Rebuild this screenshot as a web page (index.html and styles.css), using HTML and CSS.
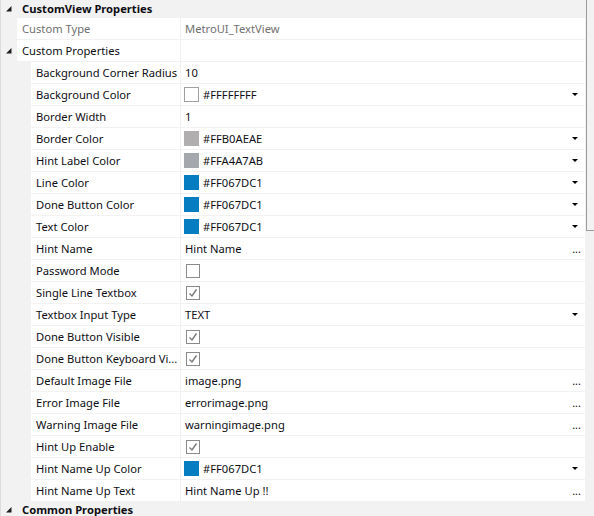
FILE: index.html
```html
<!DOCTYPE html>
<html>
<head>
<meta charset="utf-8">
<link rel="stylesheet" href="styles.css">
</head>
<body>
<div class="pg">
  <div class="grid">
    <div class="cat">
      <span class="exp"><svg width="6" height="6" viewBox="0 0 6 6"><polygon points="5.5,0 5.5,5.5 0,5.5"/></svg></span>
      <span class="cat-name">CustomView Properties</span>
    </div>
    <div class="row ro l1"><div class="ind"></div><div class="name">Custom Type</div><div class="val">MetroUI_TextView</div></div>
    <div class="row l1"><div class="ind"><span class="exp"><svg width="6" height="6" viewBox="0 0 6 6"><polygon points="5.5,0 5.5,5.5 0,5.5"/></svg></span></div><div class="name">Custom Properties</div><div class="val"></div></div>

    <div class="row l2"><div class="ind"></div><div class="name">Background Corner Radius</div><div class="val">10</div></div>
    <div class="row l2"><div class="ind"></div><div class="name">Background Color</div><div class="val"><span class="sw sw-white"></span><span class="txt">#FFFFFFFF</span><span class="dd"></span></div></div>
    <div class="row l2"><div class="ind"></div><div class="name">Border Width</div><div class="val">1</div></div>
    <div class="row l2"><div class="ind"></div><div class="name">Border Color</div><div class="val"><span class="sw sw-b0"></span><span class="txt">#FFB0AEAE</span><span class="dd"></span></div></div>
    <div class="row l2"><div class="ind"></div><div class="name">Hint Label Color</div><div class="val"><span class="sw sw-a4"></span><span class="txt">#FFA4A7AB</span><span class="dd"></span></div></div>
    <div class="row l2"><div class="ind"></div><div class="name">Line Color</div><div class="val"><span class="sw sw-blue"></span><span class="txt">#FF067DC1</span><span class="dd"></span></div></div>
    <div class="row l2"><div class="ind"></div><div class="name">Done Button Color</div><div class="val"><span class="sw sw-blue"></span><span class="txt">#FF067DC1</span><span class="dd"></span></div></div>
    <div class="row l2"><div class="ind"></div><div class="name">Text Color</div><div class="val"><span class="sw sw-blue"></span><span class="txt">#FF067DC1</span><span class="dd"></span></div></div>
    <div class="row l2"><div class="ind"></div><div class="name">Hint Name</div><div class="val"><span class="txt">Hint Name</span><span class="el">...</span></div></div>
    <div class="row l2"><div class="ind"></div><div class="name">Password Mode</div><div class="val"><span class="cb"></span></div></div>
    <div class="row l2"><div class="ind"></div><div class="name">Single Line Textbox</div><div class="val"><span class="cb"><svg width="12" height="12" viewBox="0 0 12 12"><polyline points="2.5,6.5 5,9 9.5,2.5"/></svg></span></div></div>
    <div class="row l2"><div class="ind"></div><div class="name">Textbox Input Type</div><div class="val"><span class="txt">TEXT</span><span class="dd"></span></div></div>
    <div class="row l2"><div class="ind"></div><div class="name">Done Button Visible</div><div class="val"><span class="cb"><svg width="12" height="12" viewBox="0 0 12 12"><polyline points="2.5,6.5 5,9 9.5,2.5"/></svg></span></div></div>
    <div class="row l2"><div class="ind"></div><div class="name">Done Button Keyboard Vi...</div><div class="val"><span class="cb"><svg width="12" height="12" viewBox="0 0 12 12"><polyline points="2.5,6.5 5,9 9.5,2.5"/></svg></span></div></div>
    <div class="row l2"><div class="ind"></div><div class="name">Default Image File</div><div class="val"><span class="txt">image.png</span><span class="el">...</span></div></div>
    <div class="row l2"><div class="ind"></div><div class="name">Error Image File</div><div class="val"><span class="txt">errorimage.png</span><span class="el">...</span></div></div>
    <div class="row l2"><div class="ind"></div><div class="name">Warning Image File</div><div class="val"><span class="txt">warningimage.png</span><span class="el">...</span></div></div>
    <div class="row l2"><div class="ind"></div><div class="name">Hint Up Enable</div><div class="val"><span class="cb"><svg width="12" height="12" viewBox="0 0 12 12"><polyline points="2.5,6.5 5,9 9.5,2.5"/></svg></span></div></div>
    <div class="row l2"><div class="ind"></div><div class="name">Hint Name Up Color</div><div class="val"><span class="sw sw-blue"></span><span class="txt">#FF067DC1</span><span class="dd"></span></div></div>
    <div class="row l2 last"><div class="ind"></div><div class="name">Hint Name Up Text</div><div class="val"><span class="txt">Hint Name Up !!</span><span class="el">...</span></div></div>

    <div class="cat">
      <span class="exp"><svg width="6" height="6" viewBox="0 0 6 6"><polygon points="5.5,0 5.5,5.5 0,5.5"/></svg></span>
      <span class="cat-name">Common Properties</span>
    </div>
  </div>
  <div class="sb"><div class="thumb"></div></div>
</div>
</body>
</html>
```

FILE: styles.css
```css
* { box-sizing: border-box; }
html, body {
  margin: 0;
  padding: 0;
  background: #f2f2f2;
  overflow: hidden;
}
body {
  width: 594px;
  height: 516px;
  font-family: "Noto Sans", "Open Sans", sans-serif;
  font-size: 11.2px;
  color: #0e0e14;
}
.pg {
  display: flex;
  height: 516px;
  border-left: 1px solid #dcdcdc;
}
.grid {
  width: 584px;
  display: flex;
  flex-direction: column;
  background: #f2f2f2;
}
.cat {
  display: flex;
  align-items: center;
  height: 18px;
  flex: none;
}
.cat .exp {
  width: 21px;
  padding-left: 5px;
}
.cat-name {
  font-weight: bold;
  line-height: 18px;
}
.exp {
  display: flex;
  align-items: center;
}
.exp svg {
  fill: #1e1e1e;
  display: block;
}
.row {
  display: flex;
  height: 21px;
  margin-bottom: 1px;
  flex: none;
  line-height: 21px;
}
.row.last { margin-bottom: 0; }
.ind {
  flex: none;
  display: flex;
  align-items: center;
  padding-left: 5px;
}
.l1 .ind { width: 16px; }
.l2 .ind { width: 30px; }
.name {
  flex: none;
  background: #fff;
  border-right: 1px solid #f0f0f0;
  padding-left: 5px;
  white-space: nowrap;
  overflow: hidden;
}
.l1 .name { width: 164px; }
.l2 .name { width: 150px; }
.val {
  flex: 1;
  background: #fff;
  padding-left: 4px;
  padding-right: 6px;
  display: flex;
  align-items: center;
  white-space: nowrap;
}
.ro .name, .ro .val { color: #6f6f6f; }
.txt { flex: 1; }
.sw {
  flex: none;
  width: 15px;
  height: 15px;
  margin-left: -1px;
  margin-right: 4px;
}
.sw-white { background: #fff; border: 1px solid #a0a0a0; }
.sw-b0 { background: #b0aeae; }
.sw-a4 { background: #a4a7ab; }
.sw-blue { background: #067dc1; }
.dd {
  flex: none;
  width: 0;
  height: 0;
  border-left: 3px solid transparent;
  border-right: 3px solid transparent;
  border-top: 3px solid #000;
  margin-right: 1px;
}
.el {
  flex: none;
  font-size: 11px;
  line-height: 21px;
  margin-right: -2px;
}
.cb {
  flex: none;
  width: 14px;
  height: 14px;
  margin-left: 1px;
  border: 1px solid #8a8a8a;
  background: #fff;
  display: flex;
  align-items: center;
  justify-content: center;
}
.cb svg {
  display: block;
  fill: none;
  stroke: #787878;
  stroke-width: 1.4;
}
.sb {
  flex: 1;
  padding-left: 1px;
}
.thumb {
  height: 231px;
  border-left: 1px solid #9a9a9a;
  border-bottom: 1px solid #9a9a9a;
}
```
